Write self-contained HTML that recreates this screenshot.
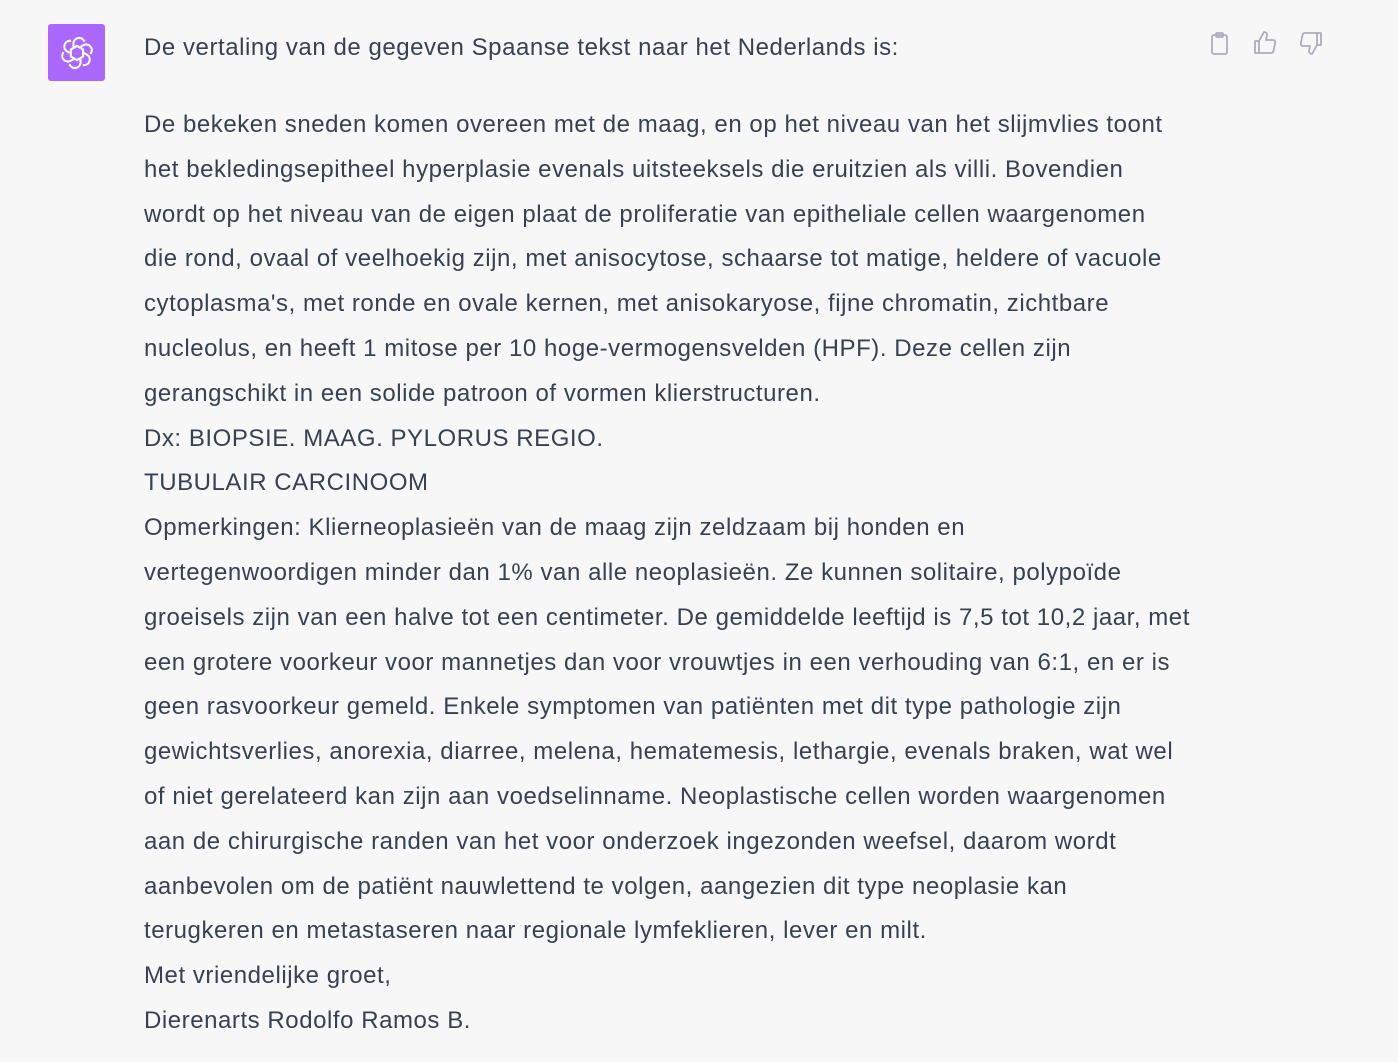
<!DOCTYPE html>
<html><head><meta charset="utf-8"><style>
html,body{margin:0;padding:0;background:#f7f7f8;width:1398px;height:1062px;overflow:hidden}
body{font-family:"Liberation Sans",sans-serif;color:#374151;font-size:24px;letter-spacing:0.55px;position:relative}
.av{position:absolute;left:48px;top:24px;width:57px;height:57px;background:#ab68ff;border-radius:3px;display:flex;align-items:center;justify-content:center}
.l{position:absolute;left:144px;white-space:nowrap;line-height:44.8px;}
.t{top:26px}
.p{top:103px}
.ic{position:absolute;top:30px}
</style></head><body>
<div class="av"><svg width="34" height="34" viewBox="0 0 24 24" fill="none" stroke="#fff" stroke-width="1.5" stroke-linejoin="round">
<g transform="translate(12 12)">
<path id="pt" d="M-2.5 -4.3 L-2.5 -7 A4 4 0 0 1 5 -8.5 L5.5 -8 "/>
<use href="#pt" transform="rotate(60)"/><use href="#pt" transform="rotate(120)"/><use href="#pt" transform="rotate(180)"/><use href="#pt" transform="rotate(240)"/><use href="#pt" transform="rotate(300)"/>
<polygon points="0,-5 4.3,-2.5 4.3,2.5 0,5 -4.3,2.5 -4.3,-2.5"/>
</g></svg></div>
<div class="l t">De vertaling van de gegeven Spaanse tekst naar het Nederlands is:</div>
<svg class="ic" style="left:1209px" width="22" height="26" viewBox="0 0 22 26" fill="none" stroke="#acacbe" stroke-width="1.8" stroke-linejoin="round"><rect x="3" y="5" width="15" height="19" rx="2"/><rect x="7" y="3" width="7" height="4" rx="1"/></svg>
<svg class="ic" style="left:1253px" width="26" height="26" viewBox="0 0 26 26" fill="none" stroke="#acacbe" stroke-width="1.8" stroke-linejoin="round"><path d="M2 11h4v12H2z"/><path d="M6 11l5-9c2 0 3 1.5 3 3l-1 5h7c1.5 0 2.5 1.300 2.2 2.700l-1.800 8.600C20 22.500 19 23 18 23H6"/></svg>
<svg class="ic" style="left:1297px" width="26" height="26" viewBox="0 0 26 26" fill="none" stroke="#acacbe" stroke-width="1.8" stroke-linejoin="round"><path d="M24 15h-4V3h4z"/><path d="M20 15l-5 9c-2 0-3-1.5-3-3l1-5H6c-1.5 0-2.5-1.3-2.2-2.7L5.6 4.7C6 3.5 7 3 8 3h12"/></svg>
<div class="l p">De bekeken sneden komen overeen met de maag, en op het niveau van het slijmvlies toont<br>het bekledingsepitheel hyperplasie evenals uitsteeksels die eruitzien als villi. Bovendien<br>wordt op het niveau van de eigen plaat de proliferatie van epitheliale cellen waargenomen<br>die rond, ovaal of veelhoekig zijn, met anisocytose, schaarse tot matige, heldere of vacuole<br>cytoplasma's, met ronde en ovale kernen, met anisokaryose, fijne chromatin, zichtbare<br>nucleolus, en heeft 1 mitose per 10 hoge-vermogensvelden (HPF). Deze cellen zijn<br>gerangschikt in een solide patroon of vormen klierstructuren.<br>Dx: BIOPSIE. MAAG. PYLORUS REGIO.<br>TUBULAIR CARCINOOM<br>Opmerkingen: Klierneoplasieën van de maag zijn zeldzaam bij honden en<br>vertegenwoordigen minder dan 1% van alle neoplasieën. Ze kunnen solitaire, polypoïde<br>groeisels zijn van een halve tot een centimeter. De gemiddelde leeftijd is 7,5 tot 10,2 jaar, met<br>een grotere voorkeur voor mannetjes dan voor vrouwtjes in een verhouding van 6:1, en er is<br>geen rasvoorkeur gemeld. Enkele symptomen van patiënten met dit type pathologie zijn<br>gewichtsverlies, anorexia, diarree, melena, hematemesis, lethargie, evenals braken, wat wel<br>of niet gerelateerd kan zijn aan voedselinname. Neoplastische cellen worden waargenomen<br>aan de chirurgische randen van het voor onderzoek ingezonden weefsel, daarom wordt<br>aanbevolen om de patiënt nauwlettend te volgen, aangezien dit type neoplasie kan<br>terugkeren en metastaseren naar regionale lymfeklieren, lever en milt.<br>Met vriendelijke groet,<br>Dierenarts Rodolfo Ramos B.</div>
</body></html>
